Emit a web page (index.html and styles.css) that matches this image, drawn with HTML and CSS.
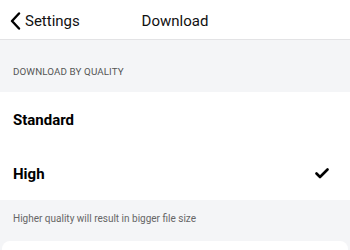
FILE: index.html
```html
<!DOCTYPE html>
<html lang="en">
<head>
  <meta charset="UTF-8">
  <meta name="viewport" content="width=device-width, initial-scale=1.0">
  <title>Download</title>
  <link rel="stylesheet" href="styles.css">
</head>
<body>

  <div class="header">
    <a class="back" href="#">
      <svg class="chevron" width="11" height="18" viewBox="0 0 11 18">
        <path d="M9 1.5 L2 9 L9 16.5" fill="none" stroke="#000" stroke-width="2.4" stroke-linecap="round" stroke-linejoin="round"/>
      </svg>
      <span>Settings</span>
    </a>
    <div class="title">Download</div>
  </div>

  <div class="section-label">DOWNLOAD BY QUALITY</div>

  <div class="list">
    <div class="row">Standard</div>
    <div class="row">
      <span>High</span>
      <svg class="check" width="14" height="11" viewBox="0 0 14 11">
        <path d="M1.5 5.5 L5 9 L12.5 1.5" fill="none" stroke="#000" stroke-width="2.6" stroke-linecap="round" stroke-linejoin="round"/>
      </svg>
    </div>
  </div>

  <div class="section-note">Higher quality will result in bigger file size</div>

  <div class="next-card"></div>

</body>
</html>
```

FILE: styles.css
```css
/* Page */
body {
  margin: 0;
  font-family: 'Roboto', 'Liberation Sans', sans-serif;
  background-color: #f4f5f7;
  color: #000;
  height: 250px;
  overflow: hidden;
}

/* Top navigation bar */
.header {
  position: relative;
  height: 40px;
  box-sizing: border-box;
  padding-top: 3px;
  background-color: #fff;
  border-bottom: 1px solid #e3e3e5;
  display: flex;
  align-items: center;
}

.back {
  display: flex;
  align-items: center;
  gap: 4px;
  padding-left: 10px;
  color: #111;
  text-decoration: none;
  font-size: 15px;
}

.title {
  position: absolute;
  left: 0;
  right: 0;
  text-align: center;
  font-size: 15px;
  color: #111;
  pointer-events: none;
}

/* Group label */
.section-label {
  height: 52px;
  box-sizing: border-box;
  padding: 26px 13px 0;
  font-size: 9.8px;
  color: #555;
  letter-spacing: 0.1px;
}

/* Options */
.list {
  background-color: #fff;
}

.row {
  height: 54px;
  padding: 1px 13px 0 13px;
  box-sizing: border-box;
  display: flex;
  align-items: center;
  justify-content: space-between;
  font-size: 15px;
  font-weight: bold;
}

.check {
  margin-right: 8px;
}

/* Footer hint */
.section-note {
  height: 40px;
  box-sizing: border-box;
  padding: 13px 13px 0;
  font-size: 10px;
  color: #666;
}

.next-card {
  height: 20px;
  margin: 1px 2px 0;
  background-color: #fff;
  border-radius: 8px 8px 0 0;
}
```
